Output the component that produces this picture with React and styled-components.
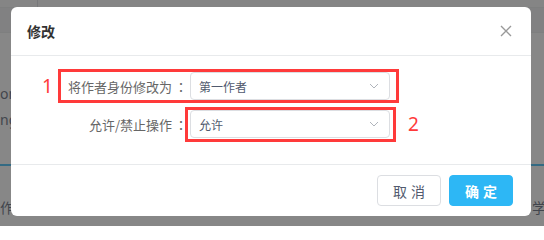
import React from "react";
import styled, { createGlobalStyle } from "styled-components";

const GlobalStyle = createGlobalStyle`
  html, body {
    margin: 0;
    padding: 0;
  }
  body {
    font-family: "Noto Sans", "Noto Sans CJK SC", sans-serif;
    background: #fff;
  }
`;

// page behind the modal
const Page = styled.div`
  position: relative;
  width: 544px;
  height: 226px;
  overflow: hidden;
  background: #fff;
  display: flex;
  flex-direction: column;
`;

const TopStrip = styled.div`
  height: 7px;
  display: flex;
  background: #fafafa;
  border-bottom: 1px solid #e8eaec;
`;

const StripCell = styled.div`
  width: ${(p) => p.$width}px;
  border-right: 1px solid #d8dadf;
`;

const SubBar = styled.div`
  height: 24px;
  background: #f0f1f3;
  border-bottom: 1px solid #e8eaec;
`;

const BgRows = styled.div`
  display: flex;
  flex-direction: column;
  padding-top: 48px;
  font-size: 14px;
  color: #515a6e;
`;

const BgRow = styled.div`
  height: 26px;
  line-height: 26px;
`;

const BgTable = styled.div`
  margin-top: 31px;
  border-top: 2px solid #2db7f5;
  display: flex;
  justify-content: space-between;
  padding-top: 32px;
  line-height: 20px;
  font-size: 14px;
  color: #515a6e;
`;

const BgCell = styled.span`
  white-space: nowrap;
  margin-right: ${(p) => p.$shift || 0}px;
`;

const Mask = styled.div`
  position: absolute;
  inset: 0;
  background: rgba(55, 55, 55, 0.6);
  display: flex;
  align-items: flex-start;
  padding: 7px 0 0 11px;
`;

const Modal = styled.div`
  width: 520px;
  background: #fff;
  border-radius: 6px;
  font-family: "Noto Sans CJK SC", sans-serif;
`;

const Header = styled.div`
  height: 49px;
  box-sizing: border-box;
  padding: 0 19px 0 16px;
  display: flex;
  align-items: center;
  justify-content: space-between;
  border-bottom: 1px solid #e8eaec;
`;

const Title = styled.div`
  font-size: 14px;
  font-weight: 700;
  color: #333;
`;

const Close = styled.svg`
  width: 12px;
  height: 12px;
`;

const Body = styled.div`
  padding: 16px 16px 26px;
  display: flex;
  flex-direction: column;
  gap: 10px;
`;

const FormItem = styled.div`
  position: relative;
  display: flex;
  align-items: center;
  height: 28px;
`;

const Label = styled.label`
  width: 163px;
  display: flex;
  justify-content: flex-end;
  align-items: center;
  font-size: 13px;
  color: #666;
  white-space: nowrap;
`;

const Colon = styled.span`
  width: 18px;
  text-align: center;
  font-family: "Noto Sans CJK TC", sans-serif;
`;

const Select = styled.div`
  width: 200px;
  height: 28px;
  box-sizing: border-box;
  border: 1px solid #dcdee2;
  border-radius: 4px;
  padding: 0 8px;
  display: flex;
  align-items: center;
  justify-content: space-between;
  font-size: 12px;
  color: #515a6e;
`;

const Arrow = styled.svg`
  width: 10px;
  height: 6px;
  margin-right: 2px;
`;

const Highlight = styled.div`
  position: absolute;
  left: ${(p) => p.$left}px;
  top: ${(p) => p.$top}px;
  width: ${(p) => p.$width}px;
  height: ${(p) => p.$height}px;
  box-sizing: border-box;
  border: 3px solid #ff3a3a;
  pointer-events: none;
`;

const Mark = styled.span`
  position: absolute;
  left: ${(p) => p.$left}px;
  top: 50%;
  transform: translateY(-50%);
  font-family: "Noto Sans", sans-serif;
  font-size: 19px;
  line-height: 1;
  color: #ff3a3a;
`;

const Footer = styled.div`
  border-top: 1px solid #e8eaec;
  padding: 10px 18px;
  display: flex;
  justify-content: flex-end;
  gap: 8px;
`;

const Button = styled.button`
  width: 64px;
  height: 31px;
  border-radius: 4px;
  font-family: "Noto Sans CJK SC", sans-serif;
  font-size: 14px;
  letter-spacing: 4px;
  padding: 0 0 0 4px;
  border: 1px solid ${(p) => (p.$primary ? "#2db7f5" : "#dcdee2")};
  background: ${(p) => (p.$primary ? "#2db7f5" : "#fff")};
  color: ${(p) => (p.$primary ? "#fff" : "#515a6e")};
  font-weight: ${(p) => (p.$primary ? 700 : 400)};
`;

const ChevronDown = () => (
  <Arrow viewBox="0 0 10 6">
    <polyline points="1,1 5,5 9,1" fill="none" stroke="#b0b4bb" strokeWidth="1" />
  </Arrow>
);

const App = () => {
  return (
    <>
      <GlobalStyle />
      <Page>
        <TopStrip>
          <StripCell $width={37} />
        </TopStrip>
        <SubBar />
        <BgRows>
          <BgRow>on</BgRow>
          <BgRow>ng</BgRow>
        </BgRows>
        <BgTable>
          <BgCell>作者</BgCell>
          <BgCell $shift={-16}>学院</BgCell>
        </BgTable>
        <Mask>
          <Modal>
            <Header>
              <Title>修改</Title>
              <Close viewBox="0 0 12 12">
                <path d="M1 1 L11 11 M11 1 L1 11" stroke="#999" strokeWidth="1.4" />
              </Close>
            </Header>
            <Body>
              <FormItem>
                <Mark $left={15}>1</Mark>
                <Label>
                  将作者身份修改为<Colon>：</Colon>
                </Label>
                <Select>
                  第一作者
                  <ChevronDown />
                </Select>
                <Highlight $left={31} $top={-3} $width={341} $height={34} />
              </FormItem>
              <FormItem>
                <Label>
                  允许/禁止操作<Colon>：</Colon>
                </Label>
                <Select>
                  允许
                  <ChevronDown />
                </Select>
                <Highlight $left={158} $top={-3} $width={211} $height={35} />
                <Mark $left={381}>2</Mark>
              </FormItem>
            </Body>
            <Footer>
              <Button>取消</Button>
              <Button $primary>确定</Button>
            </Footer>
          </Modal>
        </Mask>
      </Page>
    </>
  );
};

export default App;
